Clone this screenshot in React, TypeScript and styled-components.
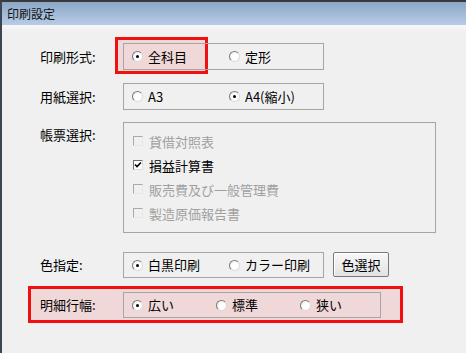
import styled, { createGlobalStyle } from 'styled-components';

const GlobalStyle = createGlobalStyle`
  html, body {
    margin: 0;
    padding: 0;
    background: #f0f0f0;
  }
  body {
    font-family: "Noto Sans CJK JP", "DejaVu Sans", sans-serif;
    color: #000;
  }
`

const Window = styled.div`
  width: 466px;
  height: 353px;
  box-sizing: border-box;
  border-top: 2px solid #3a3a3a;
  border-left: 2px solid #3d4650;
  background: #f0f0f0;
  display: flex;
  flex-direction: column;
  overflow: hidden;
`

const TitleBar = styled.div`
  height: 23px;
  flex-shrink: 0;
  display: flex;
  align-items: center;
  padding-left: 5px;
  font-size: 12px;
  color: #111;
  background: linear-gradient(#8ca7c8, #b8cce6);
`

const Body = styled.div`
  flex: 1;
  display: flex;
  flex-direction: column;
  align-items: flex-start;
  padding: 18px 0 0 38px;
  background: linear-gradient(#f7f7f7 0, #f0f0f0 6px);
`

const Row = styled.div<{ $top?: number; $align?: string }>`
  position: relative;
  display: flex;
  align-items: ${p => p.$align || 'center'};
  margin-top: ${p => p.$top || 0}px;
`

const HighlightRow = styled(Row)`
  margin-left: -12px;
  padding: 3px 19px 2px 9px;
  border: 3px solid #f01010;
  background: #f0d8d8;
`

// red annotation box over the first option
const Highlight = styled.div<{ $left: number; $top: number; $w: number; $h: number }>`
  position: absolute;
  left: ${p => p.$left}px;
  top: ${p => p.$top}px;
  width: ${p => p.$w}px;
  height: ${p => p.$h}px;
  box-sizing: border-box;
  border: 3px solid #f01010;
  background: #f0d8d8;
`

const Label = styled.div<{ $pad?: number; $lh?: number }>`
  width: 83px;
  font-size: 13px;
  line-height: ${p => p.$lh || 18}px;
  padding-top: ${p => p.$pad || 0}px;
`

const Group = styled.div<{ $w: number; $h?: number; $column?: boolean }>`
  position: relative;
  z-index: 1;
  box-sizing: border-box;
  width: ${p => p.$w}px;
  height: ${p => p.$h || 27}px;
  border: 1px solid #a5a5a5;
  display: flex;
  flex-direction: ${p => (p.$column ? 'column' : 'row')};
  align-items: ${p => (p.$column ? 'flex-start' : 'center')};
  padding: ${p => (p.$column ? '6px 0 0 9px' : '0 0 0 8px')};
`

const Option = styled.label<{ $w: number }>`
  display: flex;
  align-items: center;
  gap: 5px;
  width: ${p => p.$w}px;
  font-size: 13px;
  line-height: 18px;
`

const RadioDot = styled.span<{ $on?: boolean }>`
  position: relative;
  width: 11px;
  height: 11px;
  box-sizing: border-box;
  border-radius: 50%;
  border: 1px solid;
  border-color: #7c7c7c #dcdcdc #dcdcdc #7c7c7c;
  background: radial-gradient(circle at 60% 60%, #ffffff 40%, #e4e4e4 100%);
  flex-shrink: 0;

  &::after {
    content: '';
    display: ${p => (p.$on ? 'block' : 'none')};
    position: absolute;
    left: 3px;
    top: 3px;
    width: 3px;
    height: 3px;
    border-radius: 50%;
    background: #000;
  }
`

const CheckRow = styled.label<{ $disabled?: boolean }>`
  display: flex;
  align-items: center;
  gap: 6px;
  height: 24px;
  font-size: 13px;
  color: ${p => (p.$disabled ? '#a0a0a0' : '#000')};
`

const CheckBox = styled.span<{ $disabled?: boolean }>`
  width: 10px;
  height: 10px;
  box-sizing: border-box;
  border: 1px solid;
  border-color: ${p => (p.$disabled ? '#a8a8a8 #e8e8e8 #e8e8e8 #a8a8a8' : '#6f6f6f #dcdcdc #dcdcdc #6f6f6f')};
  background: ${p => (p.$disabled ? '#f0f0f0' : '#fff')};
  display: flex;
  align-items: center;
  justify-content: center;
  flex-shrink: 0;
`

const Button = styled.button`
  margin-left: 9px;
  width: 56px;
  height: 25px;
  box-sizing: border-box;
  padding: 0;
  font-family: inherit;
  font-size: 13px;
  color: #000;
  border: 1px solid #7a7a7a;
  border-radius: 2px;
  background: linear-gradient(#f8f8f8, #e2e2e2);
  box-shadow: inset 1px 1px 0 #fff;
`

function Radio({ on, label, w }: { on?: boolean; label: string; w: number }) {
  return (
    <Option $w={w}>
      <RadioDot $on={on} />
      <span>{label}</span>
    </Option>
  );
}

function Check({ on, disabled, label }: { on?: boolean; disabled?: boolean; label: string }) {
  return (
    <CheckRow $disabled={disabled}>
      <CheckBox $disabled={disabled}>
        {on && (
          <svg width="8" height="8" viewBox="0 0 8 8">
            <path d="M1 3.5 L3 5.5 L7 1.5" stroke="#000" strokeWidth="1.6" fill="none" />
          </svg>
        )}
      </CheckBox>
      <span>{label}</span>
    </CheckRow>
  );
}

const reports = [
  { label: '貸借対照表', disabled: true },
  { label: '損益計算書', on: true },
  { label: '販売費及び一般管理費', disabled: true },
  { label: '製造原価報告書', disabled: true },
];

export default function App() {
  return (
    <>
      <GlobalStyle />
      <Window>
        <TitleBar>印刷設定</TitleBar>
        <Body>
          <Row>
            <Label>印刷形式:</Label>
            <Highlight $left={75} $top={-6} $w={93} $h={37} />
            <Group $w={201}>
              <Radio on label="全科目" w={97} />
              <Radio label="定形" w={90} />
            </Group>
          </Row>
          <Row $top={13}>
            <Label>用紙選択:</Label>
            <Group $w={201}>
              <Radio label="A3" w={97} />
              <Radio on label="A4(縮小)" w={90} />
            </Group>
          </Row>
          <Row $top={12} $align="flex-start">
            <Label $pad={4}>帳票選択:</Label>
            <Group $w={313} $h={111} $column>
              {reports.map(r => (
                <Check key={r.label} label={r.label} on={r.on} disabled={r.disabled} />
              ))}
            </Group>
          </Row>
          <Row $top={19} $align="flex-start">
            <Label $lh={26}>色指定:</Label>
            <Group $w={201} $h={26}>
              <Radio on label="白黒印刷" w={97} />
              <Radio label="カラー印刷" w={90} />
            </Group>
            <Button>色選択</Button>
          </Row>
          <HighlightRow $top={8}>
            <Label>明細行幅:</Label>
            <Group $w={258} $h={26}>
              <Radio on label="広い" w={84} />
              <Radio label="標準" w={84} />
              <Radio label="狭い" w={70} />
            </Group>
          </HighlightRow>
        </Body>
      </Window>
    </>
  );
}
